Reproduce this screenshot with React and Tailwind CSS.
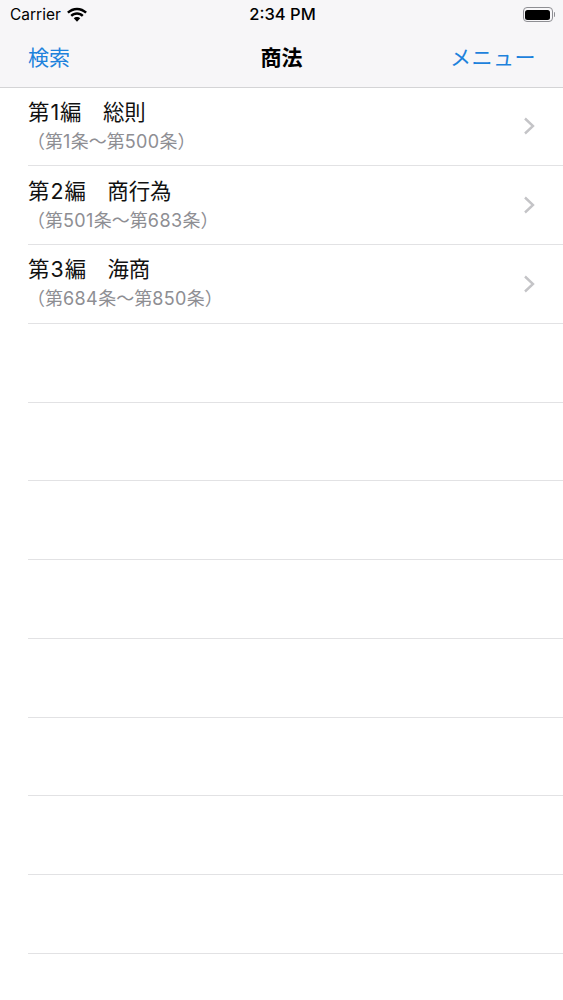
const CJK = "font-['Inter','Noto_Sans_CJK_JP',sans-serif]";

const rows = [
  ["第", "1", "編　総則", "（第", "1", "条〜第", "500", "条）"],
  ["第", "2", "編　商行為", "（第", "501", "条〜第", "683", "条）"],
  ["第", "3", "編　海商", "（第", "684", "条〜第", "850", "条）"],
];

function Wifi() {
  return (
    <svg width="22" height="16" viewBox="0 0 21 15" fill="#000">
      <path d="M10.5 2.9c3 0 5.8 1.2 7.9 3.2l1.6-1.7C17.500 2 14.100.5 10.500.5S3.500 2 1 4.400l1.600 1.700c2.100-2 4.900-3.200 7.900-3.200z" />
      <path d="M10.500 7.300c1.800 0 3.400.7 4.700 1.900l1.600-1.700c-1.700-1.600-3.900-2.600-6.300-2.600s-4.600 1-6.300 2.600l1.600 1.700c1.300-1.200 2.900-1.900 4.700-1.900z" />
      <path d="M10.500 9.300c-1.200 0-2.300.5-3.100 1.200l3.100 3.400 3.100-3.400c-.8-.7-1.900-1.200-3.100-1.200z" />
    </svg>
  );
}

function Battery() {
  return (
    <div className="flex items-center">
      <div className="w-[30px] h-[15px] rounded-[4px] border border-[#8e8e93] p-[1.5px]">
        <div className="w-full h-full rounded-[2.5px] bg-black" />
      </div>
      <div className="w-[1.5px] h-[5px] ml-[1px] rounded-r-sm bg-[#8e8e93]" />
    </div>
  );
}

function Chevron() {
  return (
    <svg width="13" height="18" viewBox="0 0 13 18" fill="none" stroke="#c4c4c7" strokeWidth="2.4">
      <path d="M2 1.5 L10 9 L2 16.500" />
    </svg>
  );
}

export default function App() {
  return (
    <div className={`${CJK} w-[563px] h-[1000px] overflow-hidden bg-white`}>
      <header className="h-[88px] bg-[#f7f6f8] border-b border-[#d4d4d6]">
        <div className="h-[29px] pl-[10px] pr-[8px] grid grid-cols-3 items-center text-black">
          <div className="flex items-center gap-[5px]">
            <span className="text-[15.5px]">Carrier</span>
            <Wifi />
          </div>
          <div className="text-center font-medium text-[16.5px] whitespace-nowrap">2:34 PM</div>
          <div className="flex justify-end">
            <Battery />
          </div>
        </div>
        <div className="h-[58px] px-[28px] grid grid-cols-3 items-center text-[21px]">
          <span className="text-[#1e82dc]">検索</span>
          <span className="font-bold text-black text-center">商法</span>
          <span className="text-[#1e82dc] text-right whitespace-nowrap tracking-[0.5px] -mr-[1px]">メニュー</span>
        </div>
      </header>
      <ul className="pl-[28px] -mt-[0.5px]">
        {rows.map(([a, b, c, d, e, f, g, h]) => (
          <li key={b} className="h-[78.75px] border-b border-[#e2e2e4] pr-[27px] flex items-center justify-between">
            <div className="pt-[1px]">
              <div className="text-[21.4px] leading-[29px] text-[#111] -mb-px">
                {a}<span className="px-[1px]">{b}</span>{c}
              </div>
              <div className="text-[18px] leading-[28px] text-[#8e8e93] mt-[2px] -ml-[1px]">
                {d}<span className="tracking-[0.4px]">{e}</span>{f}<span className="tracking-[0.4px]">{g}</span>{h}
              </div>
            </div>
            <Chevron />
          </li>
        ))}
        {Array.from({ length: 9 }, (_, i) => (
          <li key={i} className="h-[78.75px] border-b border-[#e2e2e4]" />
        ))}
      </ul>
    </div>
  );
}
